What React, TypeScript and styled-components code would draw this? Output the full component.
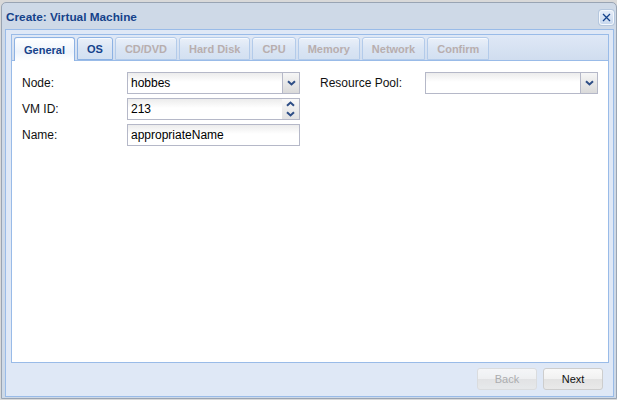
import React from "react";
import styled, { createGlobalStyle } from "styled-components";

const GlobalStyle = createGlobalStyle`
  html, body { margin: 0; padding: 0; }
  body {
    background: #d9d9d9;
    font-family: "Liberation Sans", Arial, sans-serif;
    width: 617px;
    height: 400px;
    overflow: hidden;
  }
  * { box-sizing: border-box; }
`;

const Page = styled.div`
  padding: 2px 0 0 1px;
`;

const Win = styled.div`
  width: 616px;
  height: 397px;
  border: 1px solid #99a4b3;
  border-radius: 5px 5px 0 0;
  background: #ced9e7;
  padding: 0 2px 1px 3px;
  display: flex;
  flex-direction: column;
`;

const Header = styled.div`
  height: 26px;
  display: flex;
  align-items: center;
  justify-content: space-between;
  padding-left: 1px;
`;

const Title = styled.span`
  font-size: 11.8px;
  font-weight: bold;
  color: #15428b;
  margin-top: 1px;
`;

const CloseTool = styled.button`
  width: 15px;
  height: 15px;
  padding: 0;
  margin: 2px 0 0 0;
  border: 1px solid #f4f8fd;
  border-radius: 3px;
  background: linear-gradient(#e4ecf8, #c8d8ee);
  display: flex;
  align-items: center;
  justify-content: center;
  box-shadow: 0 0 0 1px #b5c7de;
`;

const Body = styled.div`
  flex: 1;
  border: 1px solid #99bbe8;
  background: #dfe8f6;
  padding: 4px 4px 0 5px;
  display: flex;
  flex-direction: column;
`;

const TabStrip = styled.div`
  height: 27px;
  border: 1px solid #99bbe8;
  background: linear-gradient(#dfe8f6, #d0ddef);
  padding: 2px 0 0 2px;
  display: flex;
  align-items: flex-end;
  gap: 2px;
`;

const Tab = styled.div<{ $active?: boolean; $disabled?: boolean }>`
  height: ${(p) => (p.$active ? "24px" : "23px")};
  margin-bottom: ${(p) => (p.$active ? "-1px" : "0")};
  align-self: flex-start;
  padding: 0 9px;
  border: 1px solid ${(p) => (p.$disabled ? "#b3cbea" : "#8db2e3")};
  border-bottom: ${(p) => (p.$active ? "none" : `1px solid ${p.$disabled ? "#b3cbea" : "#8db2e3"}`)};
  border-radius: 3px 3px 0 0;
  background: ${(p) =>
    p.$active
      ? "linear-gradient(#ffffff, #eef4fc 60%, #ffffff)"
      : "linear-gradient(#eaf0f9 0, #dae5f4 50%, #d3e0f1 100%)"};
  box-shadow: inset 0 1px 0 #f7fafe;
  font-size: 11px;
  font-weight: bold;
  color: ${(p) => (p.$disabled ? "#b8aeae" : "#15428b")};
  display: flex;
  align-items: center;
  padding-top: 1px;
  white-space: nowrap;
`;

const TabBody = styled.div`
  flex: 1;
  background: #ffffff;
  border: 1px solid #99bbe8;
  border-top: none;
  padding: 11px 10px;
`;

const Form = styled.div`
  display: flex;
  gap: 20px;
`;

const Column = styled.div`
  display: flex;
  flex-direction: column;
  gap: 4px;
`;

const Row = styled.div`
  display: flex;
  align-items: center;
  height: 22px;
`;

const Label = styled.label`
  width: 105px;
  font-size: 12px;
  color: #111;
`;

const Field = styled.div`
  width: 173px;
  height: 22px;
  border: 1px solid #b5b8c8;
  background: linear-gradient(#ececec 0, #ffffff 9px);
  display: flex;
  align-items: stretch;
`;

const Value = styled.span`
  flex: 1;
  padding-left: 3px;
  font-size: 12px;
  color: #000;
  display: flex;
  align-items: center;
`;

const Trigger = styled.div`
  width: 17px;
  border-left: 1px solid #b5b8c8;
  background: linear-gradient(#f6f6f6, #dadada);
  display: flex;
  align-items: center;
  justify-content: center;
`;

const Spinner = styled.div`
  width: 17px;
  display: flex;
  flex-direction: column;
  background: linear-gradient(#f8f8f8, #e2e2e2);
`;

const SpinHalf = styled.div`
  flex: 1;
  display: flex;
  align-items: center;
  justify-content: center;
`;

const Footer = styled.div`
  display: flex;
  justify-content: flex-end;
  gap: 6px;
  padding: 5px 6px 6px 0;
`;

const Button = styled.button<{ $disabled?: boolean }>`
  width: 60px;
  height: 22px;
  border: 1px solid ${(p) => (p.$disabled ? "#dadada" : "#cdcdcd")};
  border-radius: 3px;
  background: linear-gradient(#f9f9f9 0, #f1f1f1 50%, #e2e2e2 50%, #e9e9e9 100%);
  font-family: "Liberation Sans", Arial, sans-serif;
  font-size: 11px;
  color: ${(p) => (p.$disabled ? "#a3a3a3" : "#111")};
  padding: 0;
  opacity: ${(p) => (p.$disabled ? 0.85 : 1)};
`;

const ChevronDown = () => (
  <svg width="9" height="6" viewBox="0 0 9 6">
    <path d="M1 1.2 L4.5 4.5 L8 1.2" fill="none" stroke="#2e4e86" strokeWidth="2" />
  </svg>
);

const ChevronUp = () => (
  <svg width="9" height="6" viewBox="0 0 9 6">
    <path d="M1 4.8 L4.5 1.5 L8 4.8" fill="none" stroke="#2e4e86" strokeWidth="2" />
  </svg>
);

const tabs = [
  { name: "General", active: true },
  { name: "OS" },
  { name: "CD/DVD", disabled: true },
  { name: "Hard Disk", disabled: true },
  { name: "CPU", disabled: true },
  { name: "Memory", disabled: true },
  { name: "Network", disabled: true },
  { name: "Confirm", disabled: true },
];

export default function App() {
  return (
    <>
      <GlobalStyle />
      <Page>
        <Win>
          <Header>
            <Title>Create: Virtual Machine</Title>
            <CloseTool aria-label="Close">
              <svg width="9" height="9" viewBox="0 0 9 9">
                <path d="M1 1 L8 8 M8 1 L1 8" stroke="#15428b" strokeWidth="1.3" />
              </svg>
            </CloseTool>
          </Header>
          <Body>
            <TabStrip>
              {tabs.map((t) => (
                <Tab key={t.name} $active={t.active} $disabled={t.disabled}>
                  {t.name}
                </Tab>
              ))}
            </TabStrip>
            <TabBody>
              <Form>
                <Column>
                  <Row>
                    <Label>Node:</Label>
                    <Field>
                      <Value>hobbes</Value>
                      <Trigger>
                        <ChevronDown />
                      </Trigger>
                    </Field>
                  </Row>
                  <Row>
                    <Label>VM ID:</Label>
                    <Field>
                      <Value>213</Value>
                      <Spinner>
                        <SpinHalf>
                          <ChevronUp />
                        </SpinHalf>
                        <SpinHalf>
                          <ChevronDown />
                        </SpinHalf>
                      </Spinner>
                    </Field>
                  </Row>
                  <Row>
                    <Label>Name:</Label>
                    <Field>
                      <Value>appropriateName</Value>
                    </Field>
                  </Row>
                </Column>
                <Column>
                  <Row>
                    <Label>Resource Pool:</Label>
                    <Field>
                      <Value />
                      <Trigger>
                        <ChevronDown />
                      </Trigger>
                    </Field>
                  </Row>
                </Column>
              </Form>
            </TabBody>
            <Footer>
              <Button $disabled>Back</Button>
              <Button>Next</Button>
            </Footer>
          </Body>
        </Win>
      </Page>
    </>
  );
}
